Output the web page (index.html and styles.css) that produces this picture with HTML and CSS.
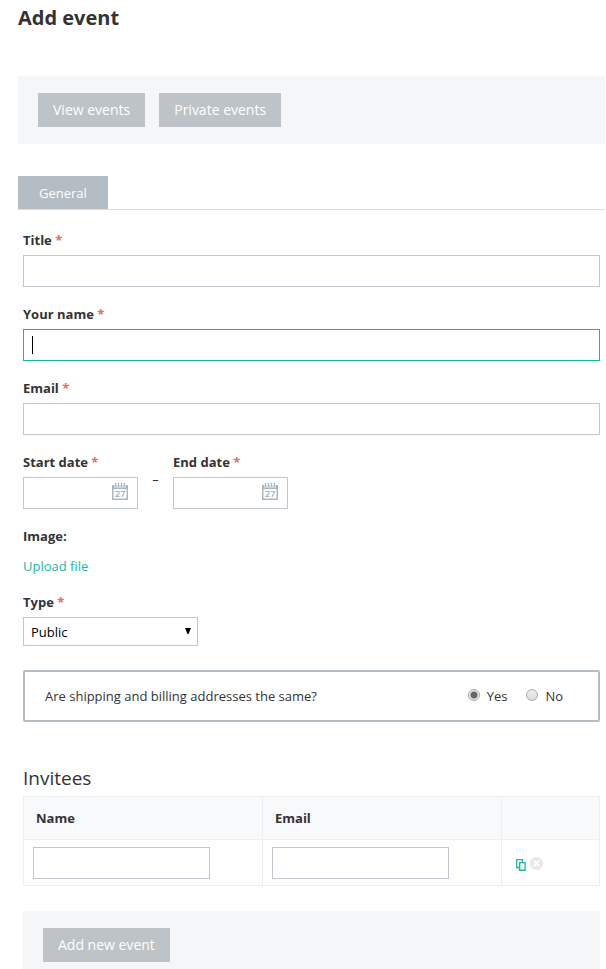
FILE: index.html
```html
<!DOCTYPE html>
<html lang="en">
<head>
<meta charset="utf-8">
<meta name="viewport" content="width=device-width, initial-scale=1">
<title>Add event</title>
<link rel="stylesheet" href="styles.css">
</head>
<body>
<svg class="sprite" aria-hidden="true">
  <symbol id="calendar" viewBox="0 0 16 17">
    <path d="M0 2h16v15H0zM1.500 6v9.500h13V6z" fill="#a9b5bf" fill-rule="evenodd"/>
    <path d="M3.500 0v4.500M6.500 0v4.500M9.500 0v4.500M12.500 0v4.500" stroke="#fff" stroke-width="2.400"/>
    <path d="M3.500 0v4M6.500 0v4M9.500 0v4M12.500 0v4" stroke="#a9b5bf" stroke-width="1.300"/>
    <path d="M3.500 8.500h3.500v2L4 13.500H7.500M8.800 8.500h3.700L10 14" fill="none" stroke="#a9b5bf" stroke-width="1.100"/>
  </symbol>
</svg>
<main class="page">
  <h1 class="page-title">Add event</h1>
  <nav class="toolbar">
    <button type="button" class="button">View events</button>
    <button type="button" class="button">Private events</button>
  </nav>
  <div class="tabs"><button type="button" class="tab">General</button></div>

  <form class="form">
    <div class="field">
      <label class="label required" for="title">Title</label>
      <input class="input" id="title" type="text">
    </div>
    <div class="field">
      <label class="label required" for="name">Your name</label>
      <input class="input input-active" id="name" type="text">
    </div>
    <div class="field">
      <label class="label required" for="email">Email</label>
      <input class="input" id="email" type="email">
    </div>
    <div class="field dates">
      <div class="date">
        <label class="label required" for="start">Start date</label>
        <div class="date-box">
          <input class="input" id="start" type="text">
          <svg class="calendar"><use href="#calendar"/></svg>
        </div>
      </div>
      <span class="dash">–</span>
      <div class="date">
        <label class="label required" for="end">End date</label>
        <div class="date-box">
          <input class="input" id="end" type="text">
          <svg class="calendar"><use href="#calendar"/></svg>
        </div>
      </div>
    </div>
    <div class="upload">
      <span class="label">Image:</span>
      <a class="link" href="#upload">Upload file</a>
    </div>
    <div class="type">
      <label class="label required" for="type">Type</label>
      <div class="select-box">
        <select class="select" id="type"><option>Public</option><option>Private</option></select>
        <svg class="arrow" viewBox="0 0 6 6" aria-hidden="true"><path d="M0 0h6L3.500 6h-1z"/></svg>
      </div>
    </div>
    <div class="question" role="radiogroup" aria-labelledby="same">
      <span class="question-text" id="same">Are shipping and billing addresses the same?</span>
      <label class="choice"><input class="radio" type="radio" name="same" checked>Yes</label>
      <label class="choice"><input class="radio" type="radio" name="same">No</label>
    </div>

    <h2 class="section-title">Invitees</h2>
    <table class="invitees">
      <thead>
        <tr><th class="col-text">Name</th><th class="col-text">Email</th><th class="col-tools"></th></tr>
      </thead>
      <tbody>
        <tr>
          <td><input class="input input-cell" type="text" aria-label="Name"></td>
          <td><input class="input input-cell" type="email" aria-label="Email"></td>
          <td>
            <div class="tools">
              <button type="button" class="tool" aria-label="Clone">
                <svg width="10" height="12" viewBox="0 0 10 12" fill="none" stroke="#1abc9c" stroke-width="1.300"><path d="M3 8.500H.7v-7.800h5.800V3"/><path d="M3.600 3.600h5.500v7.700H3.600z" stroke-width="1.400"/></svg>
              </button>
              <button type="button" class="tool tool-remove" aria-label="Remove">
                <svg width="13" height="13" viewBox="0 0 13 13"><circle cx="6.500" cy="6.500" r="6.500" fill="#e8e8e8"/><path d="M3.700 3.700l5.600 5.600M9.300 3.700L3.700 9.300" stroke="#fff" stroke-width="1.800"/></svg>
              </button>
            </div>
          </td>
        </tr>
      </tbody>
    </table>
    <div class="toolbar toolbar-bottom">
      <button type="submit" class="button">Add new event</button>
    </div>
  </form>
</main>
</body>
</html>
```
FILE: styles.css
```css
* { box-sizing: border-box; }
body {
  margin: 0;
  background: #fff;
  color: #333;
  font: 13px/20px "Open Sans", sans-serif;
}
button, input, select { font: inherit; }
.sprite { position: absolute; width: 0; height: 0; }
.page { padding: 4px 1px 0 18px; }
.page-title { margin: 0 0 44px; font-size: 20px; line-height: 28px; }
.toolbar {
  display: flex;
  gap: 14px;
  padding: 17px 20px;
  background: #f5f6f8;
}
.button {
  height: 34px;
  padding: 0 15px;
  border: 0;
  background: #bdc3c7;
  color: #fff;
  font-size: 14px;
}
.tabs { display: flex; margin-top: 32px; border-bottom: 1px solid #d8dcdf; }
.tab {
  height: 33px;
  padding: 0 21px;
  border: 0;
  background: #b4bcc4;
  color: #fff;
}
.form { padding: 20px 5px 0; }
.field { margin-bottom: 17px; }
.label { display: block; margin-bottom: 5px; font-weight: 700; }
.required::after { content: " *"; color: #ea6b5d; }
.input {
  display: block;
  width: 100%;
  height: 32px;
  padding: 0 8px;
  border: 1px solid #c1c6cf;
  border-radius: 0;
  background: #fff;
  outline: 0;
}
.input-active {
  border-color: #1db598;
  background: linear-gradient(#000, #000) 8px center / 1px 18px no-repeat #fff;
}
.dates { display: flex; }
.date { width: 115px; }
.date-box { position: relative; }
.calendar { position: absolute; top: 6px; right: 10px; width: 16px; height: 17px; }
.dash { width: 35px; padding-top: 17px; text-align: center; }
.upload { margin-bottom: 16px; }
.upload .label { margin-bottom: 10px; }
.link { display: block; color: #1abc9c; text-decoration: none; }
.type { margin-bottom: 24px; }
.select-box { position: relative; width: 175px; }
.select {
  display: block;
  width: 100%;
  height: 29px;
  padding: 0 7px;
  border: 1px solid #c1c6cf;
  border-radius: 0;
  background: #fff;
  color: #000;
  appearance: none;
}
.arrow { position: absolute; top: 11px; right: 7px; width: 6px; height: 6px; pointer-events: none; }
.question {
  display: flex;
  align-items: center;
  gap: 19px;
  height: 52px;
  padding: 0 35px 0 20px;
  border: 2px solid #b4bcc4;
  border-radius: 2px;
}
.question-text { margin-right: auto; }
.choice { display: flex; align-items: flex-start; gap: 7px; }
.radio {
  width: 12px;
  height: 12px;
  margin: 3px 0 0;
  border: 1px solid #aaa;
  border-radius: 50%;
  background: linear-gradient(#eee, #ddd);
  appearance: none;
}
.radio:checked { background: radial-gradient(circle, #666 3px, #e6e6e6 4px); }
.section-title { margin: 42px 0 4px; font-size: 19px; line-height: 28px; font-weight: 400; }
.invitees { width: 100%; border-collapse: collapse; table-layout: fixed; }
.invitees th, .invitees td { border: 1px solid #eceef0; text-align: left; }
.invitees th { height: 43px; padding: 0 12px; background: #f8f9fb; }
.invitees td { padding: 7px 9px 6px; }
.invitees .col-tools { width: 98px; }
.input-cell { width: 177px; max-width: 100%; }
.tools { display: flex; gap: 4px; padding: 2px 5px 0; }
.tool { display: flex; align-items: flex-end; height: 14px; padding: 0; border: 0; background: none; }
.tool-remove { align-items: flex-start; }
.toolbar-bottom { margin-top: 25px; padding-bottom: 7px; }
```
